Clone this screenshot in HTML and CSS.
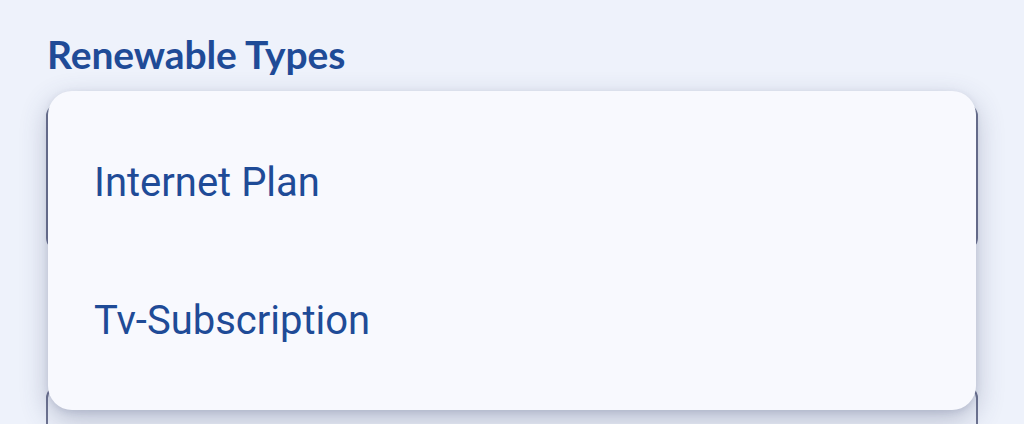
FILE: index.html
```html
<!DOCTYPE html>
<html lang="en">
<head>
    <meta charset="UTF-8">
    <meta name="viewport" content="width=device-width, initial-scale=1.0">
    <title>Renewable Types</title>
    <link rel="stylesheet" href="styles.css">
</head>
<body>

    <div class="page">
        <h1 class="title">Renewable Types</h1>

        <div class="form">
            <div class="field field-type"></div>
            <div class="field field-next"></div>

            <!-- Dropdown menu opened over the first field -->
            <ul class="menu">
                <li class="menu-item">Internet Plan</li>
                <li class="menu-item">Tv-Subscription</li>
            </ul>
        </div>
    </div>

</body>
</html>
```

FILE: styles.css
```css
body {
    font-family: Roboto, 'Noto Sans', sans-serif;
    background-color: #eef2fb;
    margin: 0;
    padding: 0;
    height: 100vh;
    overflow: hidden;
}

.page {
    padding: 30px 46px 0 46px;
}

.title {
    font-family: Lato, sans-serif;
    font-weight: 700;
    font-size: 39px;
    letter-spacing: -0.1px;
    color: #1f4b97;
    margin: 0 0 0 1px;
    line-height: 48px;
}

.form {
    position: relative;
    margin-top: 26px;
    display: flex;
    flex-direction: column;
    gap: 136px;
}

.field {
    border: 2px solid #6e7491;
    border-radius: 12px;
    background-color: #eef2fb;
}

.field-type {
    height: 142px;
}

.field-next {
    height: 80px;
}

.menu {
    position: absolute;
    top: -13px;
    left: 2px;
    right: 2px;
    list-style: none;
    margin: 0;
    padding: 22px 0 21px 0;
    background-color: #f8f9fe;
    border-radius: 24px;
    box-shadow: 0 10px 28px rgba(55, 65, 105, 0.3), 0 2px 6px rgba(55, 65, 105, 0.12);
}

.menu-item {
    height: 138px;
    display: flex;
    align-items: center;
    padding-left: 46px;
    font-size: 40px;
    color: #1f4b97;
}
```
